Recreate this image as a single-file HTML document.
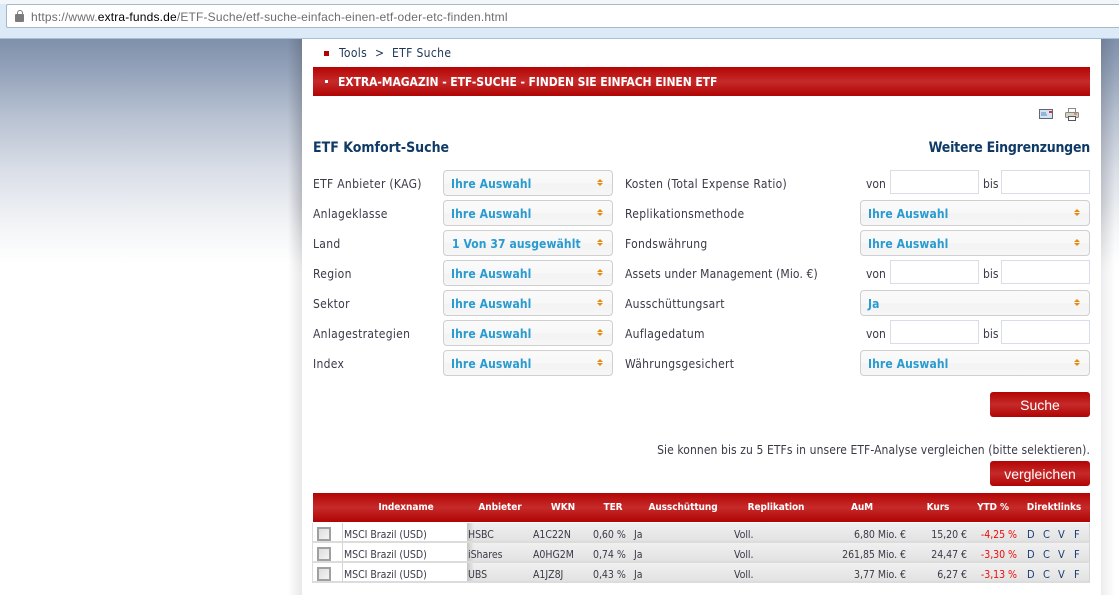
<!DOCTYPE html>
<html><head><meta charset="utf-8"><style>
html,body{margin:0;padding:0;width:1119px;height:595px;overflow:hidden;background:#fff}
body{position:relative;font-family:"DejaVu Sans Condensed","DejaVu Sans","Liberation Sans",sans-serif;color:#333}
div,span{position:absolute;white-space:nowrap;box-sizing:border-box}
.l{font-size:12px;color:#3a3a48;left:313px;line-height:16px;letter-spacing:.3px}
.l2{left:625px}
.sel{height:26px;border:1px solid #cfcfcf;border-radius:4px;background:linear-gradient(#fafafa,#f8f8f8 50%,#f3f3f3 54%,#f6f6f6);color:#2a9bd0;font-weight:bold;font-size:12px;letter-spacing:.1px;line-height:26px;padding-left:7px}
.s1{left:443px;width:170px}.s2{left:860px;width:230px}
.ar{right:10px;top:8px;width:5px;height:8px}
.ar:before{content:"";position:absolute;left:0;top:0;border:3px solid transparent;border-top:0;border-bottom:3px solid #e88a10}
.ar:after{content:"";position:absolute;left:0;top:4px;border:3px solid transparent;border-bottom:0;border-top:3px solid #e88a10}
.in{height:24px;width:89px;border:1px solid #d9dde8;background:#fff}
.t{font-size:12px;color:#3a3a48;line-height:16px}
.btn{left:990px;width:100px;height:25px;border-radius:3px;background:linear-gradient(#b30505,#c62a2a 50%,#b00404);color:#fff;font-family:"Liberation Sans",sans-serif;font-size:14px;text-align:center;line-height:26px}
.h{top:493px;height:29px;line-height:30px;font-size:10px;letter-spacing:-.08px;font-weight:bold;color:#fff;text-align:center;transform:translateX(-50%)}
.c{height:20px;top:0;border-right:1px solid #d4d4d4;border-bottom:2px solid #dcdcdc;background:linear-gradient(#f0f0f0,#e2e2e2);font-size:10.5px;letter-spacing:-.04px;line-height:24px;color:#3a3a48;padding-left:1px}
.r{text-align:right;padding-right:0}
.w{background:#fff}
.red{color:#f00a0a;padding-right:1px}
.sh{background:linear-gradient(90deg,#c4c4c4,rgba(220,220,220,0) 7px),linear-gradient(#f0f0f0,#e2e2e2)}
.row{left:0;width:1119px;height:20px}
.dl{color:#1d3f73;font-size:11px;top:0;line-height:24px}
.cb{left:4px;top:4px;width:14px;height:14px;border:2px solid #a0a0a0;background:linear-gradient(135deg,#ddd,#f4f4f4)}
.shl,.shr{top:39px;height:556px;width:14px;-webkit-mask-image:linear-gradient(#000,#000 30%,rgba(0,0,0,.45) 42%,rgba(0,0,0,.45));mask-image:linear-gradient(#000,#000 30%,rgba(0,0,0,.45) 42%,rgba(0,0,0,.45))}
.shl{left:288px;background:linear-gradient(90deg,rgba(70,70,80,0),rgba(70,70,80,.28))}
.shr{left:1101px;background:linear-gradient(270deg,rgba(70,70,80,0),rgba(70,70,80,.22))}
</style></head><body>
<div style="left:0;top:0;width:1119px;height:39px;background:#dce9f7;border-bottom:1px solid #a9bfd6"></div>
<div style="left:0;top:0;width:1119px;height:4px;background:#f2f6fb"></div>
<div style="left:6px;top:4px;width:1120px;height:24px;background:#fff;border:1px solid #a8b8c8;border-radius:2px"></div>
<div style="left:15px;top:14px;width:9px;height:8px;background:#7b7b7b;border-radius:1px"></div>
<div style="left:16.5px;top:9.5px;width:6px;height:6px;border:1.5px solid #7b7b7b;border-bottom:0;border-radius:3px 3px 0 0"></div>
<div style="left:31px;top:9px;font-family:'Liberation Sans',sans-serif;font-size:12px;line-height:16px;color:#6d6d6d;letter-spacing:.17px">https://www.<span style="position:static;color:#000">extra-funds.de</span>/ETF-Suche/etf-suche-einfach-einen-etf-oder-etc-finden.html</div>

<div style="left:0;top:39px;width:1119px;height:225px;background:linear-gradient(#7f90ab,#95a4bb 15%,#b8c2d2 35%,#d9deE7 58%,#f5f6f8 85%,#fff)"></div>
<div class="shl"></div>
<div class="shr"></div>
<div style="left:302px;top:39px;width:799px;height:556px;background:#fff"></div>

<div style="left:324px;top:51px;width:5px;height:5px;background:#b00404"></div>
<div class="t" style="left:339px;top:45px;color:#1d3557;letter-spacing:.35px">Tools</div>
<div class="t" style="left:375px;top:45px;color:#1d3557">&gt;</div>
<div class="t" style="left:392px;top:45px;color:#1d3557;letter-spacing:.35px">ETF Suche</div>

<div style="left:313px;top:67px;width:777px;height:29px;background:linear-gradient(#b30505,#c62a2a 50%,#b00404)"></div>
<div style="left:325px;top:80px;width:3px;height:3px;background:#fff"></div>
<div style="left:338px;top:74px;color:#fff;font-size:12px;font-weight:bold;line-height:16px;letter-spacing:-.07px">EXTRA-MAGAZIN - ETF-SUCHE - FINDEN SIE EINFACH EINEN ETF</div>

<svg style="position:absolute;left:1039px;top:109px" width="15" height="11"><rect x=".5" y=".5" width="13" height="9" fill="#d3e3f5" stroke="#5f6772"/><rect x="10" y="2" width="3" height="2" fill="#e03030"/><path d="M2 4h5M2 6h6" stroke="#5a86c0"/></svg>
<svg style="position:absolute;left:1065px;top:108px" width="14" height="14"><rect x="3.500" y=".5" width="7" height="4" fill="#fff" stroke="#8a8a8a"/><rect x=".5" y="4.500" width="13" height="5" rx="1" fill="#d6d3c6" stroke="#8a8a80"/><rect x="3.500" y="8.500" width="7" height="4" fill="#fff" stroke="#555"/><rect x="9" y="5.500" width="3" height="1" fill="#d05050"/></svg>

<div style="left:313px;top:140px;font-size:14px;font-weight:bold;color:#0f3a66;line-height:16px">ETF Komfort-Suche</div>
<div style="right:29px;top:140px;font-size:14px;font-weight:bold;color:#0f3a66;line-height:16px;letter-spacing:-.24px">Weitere Eingrenzungen</div>

<div class="l" style="top:176px">ETF Anbieter (KAG)</div>
<div class="l" style="top:206px">Anlageklasse</div>
<div class="l" style="top:236px">Land</div>
<div class="l" style="top:266px">Region</div>
<div class="l" style="top:296px">Sektor</div>
<div class="l" style="top:326px">Anlagestrategien</div>
<div class="l" style="top:356px">Index</div>

<div class="sel s1" style="top:170px">Ihre Auswahl<span class="ar"></span></div>
<div class="sel s1" style="top:200px">Ihre Auswahl<span class="ar"></span></div>
<div class="sel s1" style="top:230px;padding-left:8px">1 Von 37 ausgewählt<span class="ar"></span></div>
<div class="sel s1" style="top:260px">Ihre Auswahl<span class="ar"></span></div>
<div class="sel s1" style="top:290px">Ihre Auswahl<span class="ar"></span></div>
<div class="sel s1" style="top:320px">Ihre Auswahl<span class="ar"></span></div>
<div class="sel s1" style="top:350px">Ihre Auswahl<span class="ar"></span></div>

<div class="l l2" style="top:176px">Kosten (Total Expense Ratio)</div>
<div class="l l2" style="top:206px">Replikationsmethode</div>
<div class="l l2" style="top:236px">Fondswährung</div>
<div class="l l2" style="top:266px;letter-spacing:.12px">Assets under Management (Mio. €)</div>
<div class="l l2" style="top:296px">Ausschüttungsart</div>
<div class="l l2" style="top:326px">Auflagedatum</div>
<div class="l l2" style="top:356px">Währungsgesichert</div>

<div class="t" style="left:866px;top:176px">von</div><div class="in" style="left:890px;top:170px"></div><div class="t" style="left:983px;top:176px">bis</div><div class="in" style="left:1001px;top:170px"></div>
<div class="sel s2" style="top:200px">Ihre Auswahl<span class="ar"></span></div>
<div class="sel s2" style="top:230px">Ihre Auswahl<span class="ar"></span></div>
<div class="t" style="left:866px;top:266px">von</div><div class="in" style="left:890px;top:260px"></div><div class="t" style="left:983px;top:266px">bis</div><div class="in" style="left:1001px;top:260px"></div>
<div class="sel s2" style="top:290px">Ja<span class="ar"></span></div>
<div class="t" style="left:866px;top:326px">von</div><div class="in" style="left:890px;top:320px"></div><div class="t" style="left:983px;top:326px">bis</div><div class="in" style="left:1001px;top:320px"></div>
<div class="sel s2" style="top:350px">Ihre Auswahl<span class="ar"></span></div>

<div class="btn" style="top:392px">Suche</div>
<div class="t" style="right:29px;top:442px;letter-spacing:.09px">Sie konnen bis zu 5 ETFs in unsere ETF-Analyse vergleichen (bitte selektieren).</div>
<div class="btn" style="top:461px">vergleichen</div>

<div style="left:313px;top:493px;width:777px;height:29px;background:linear-gradient(#b30505,#c62a2a 50%,#b00404)"></div>
<div class="h" style="left:406px">Indexname</div>
<div class="h" style="left:500px">Anbieter</div>
<div class="h" style="left:563px">WKN</div>
<div class="h" style="left:613px">TER</div>
<div class="h" style="left:683px">Ausschüttung</div>
<div class="h" style="left:776px">Replikation</div>
<div class="h" style="left:862px">AuM</div>
<div class="h" style="left:938px">Kurs</div>
<div class="h" style="left:993px">YTD %</div>
<div class="h" style="left:1054px">Direktlinks</div>

<div class="row" style="top:523px">
<div class="c w" style="left:312px;width:31px;border-left:1px solid #dcdcdc"><span class="cb"></span></div>
<div class="c w" style="left:343px;width:125px">MSCI Brazil (USD)</div>
<div class="c sh" style="left:467px;width:66px">HSBC</div>
<div class="c" style="left:532px;width:61px">A1C22N</div>
<div class="c" style="left:592px;width:42px">0,60 %</div>
<div class="c" style="left:633px;width:101px">Ja</div>
<div class="c" style="left:733px;width:86px">Voll.</div>
<div class="c r" style="left:818px;width:89px">6,80 Mio. €</div>
<div class="c r" style="left:906px;width:62px">15,20 €</div>
<div class="c r red" style="left:967px;width:52px">-4,25 %</div>
<div class="c" style="left:1018px;width:72px"><span class="dl" style="left:9px">D</span><span class="dl" style="left:25px">C</span><span class="dl" style="left:40px">V</span><span class="dl" style="left:56px">F</span></div>
</div>
<div class="row" style="top:543px">
<div class="c w" style="left:312px;width:31px;border-left:1px solid #dcdcdc"><span class="cb"></span></div>
<div class="c w" style="left:343px;width:125px">MSCI Brazil (USD)</div>
<div class="c sh" style="left:467px;width:66px">iShares</div>
<div class="c" style="left:532px;width:61px">A0HG2M</div>
<div class="c" style="left:592px;width:42px">0,74 %</div>
<div class="c" style="left:633px;width:101px">Ja</div>
<div class="c" style="left:733px;width:86px">Voll.</div>
<div class="c r" style="left:818px;width:89px">261,85 Mio. €</div>
<div class="c r" style="left:906px;width:62px">24,47 €</div>
<div class="c r red" style="left:967px;width:52px">-3,30 %</div>
<div class="c" style="left:1018px;width:72px"><span class="dl" style="left:9px">D</span><span class="dl" style="left:25px">C</span><span class="dl" style="left:40px">V</span><span class="dl" style="left:56px">F</span></div>
</div>
<div class="row" style="top:563px">
<div class="c w" style="left:312px;width:31px;border-left:1px solid #dcdcdc"><span class="cb"></span></div>
<div class="c w" style="left:343px;width:125px">MSCI Brazil (USD)</div>
<div class="c sh" style="left:467px;width:66px">UBS</div>
<div class="c" style="left:532px;width:61px">A1JZ8J</div>
<div class="c" style="left:592px;width:42px">0,43 %</div>
<div class="c" style="left:633px;width:101px">Ja</div>
<div class="c" style="left:733px;width:86px">Voll.</div>
<div class="c r" style="left:818px;width:89px">3,77 Mio. €</div>
<div class="c r" style="left:906px;width:62px">6,27 €</div>
<div class="c r red" style="left:967px;width:52px">-3,13 %</div>
<div class="c" style="left:1018px;width:72px"><span class="dl" style="left:9px">D</span><span class="dl" style="left:25px">C</span><span class="dl" style="left:40px">V</span><span class="dl" style="left:56px">F</span></div>
</div>
</body></html>
